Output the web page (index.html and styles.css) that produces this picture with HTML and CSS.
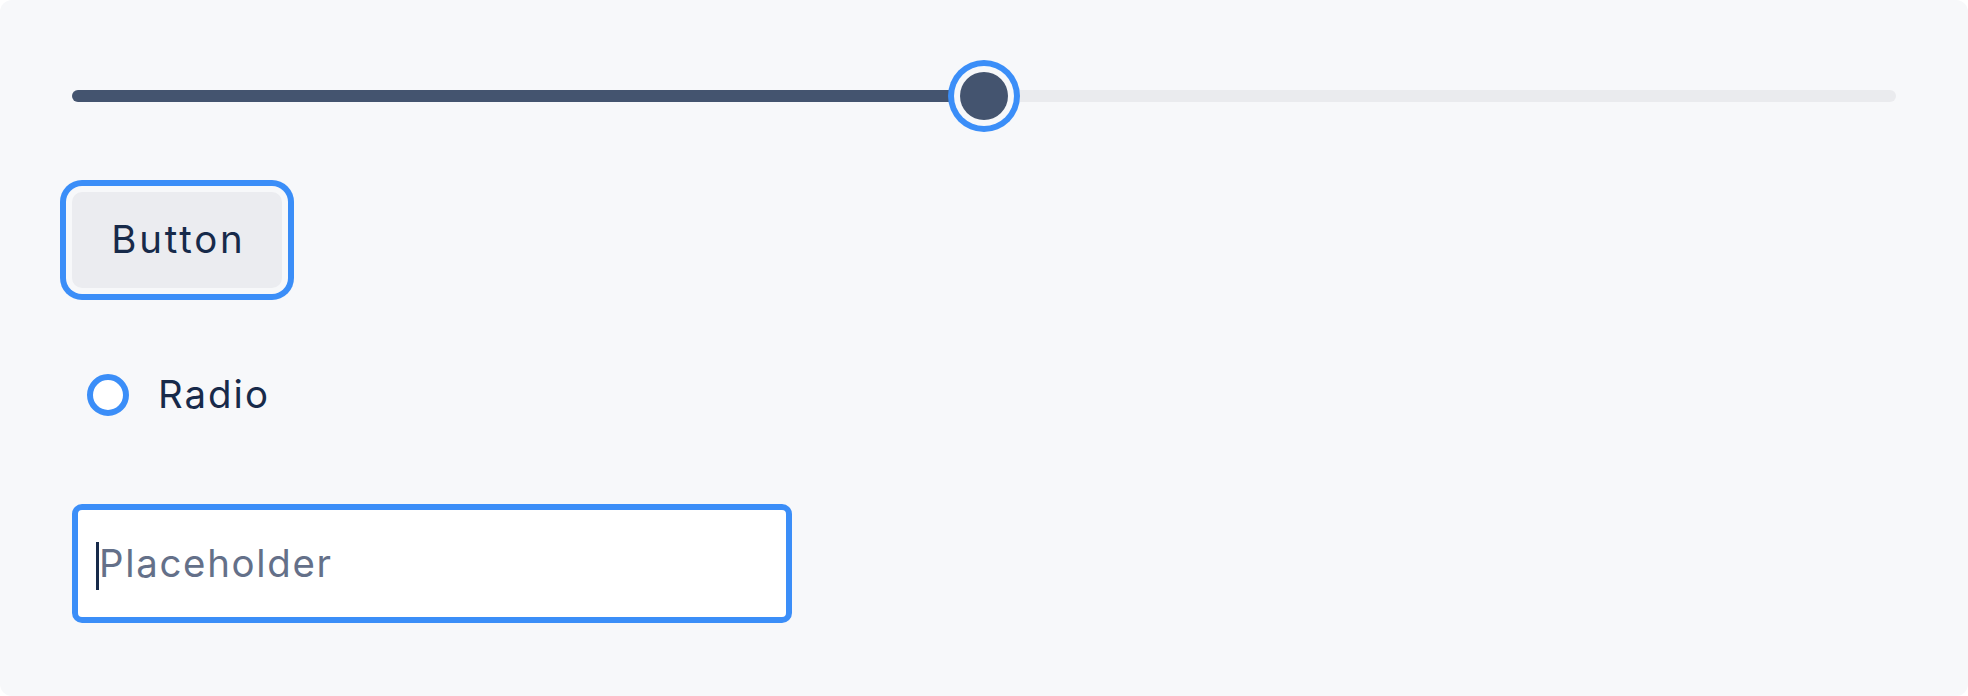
FILE: index.html
```html
<!DOCTYPE html>
<html lang="en">
<head>
<meta charset="utf-8">
<title>Controls</title>
<link rel="stylesheet" href="styles.css">
</head>
<body>
<div class="panel">
  <div class="slider">
    <div class="track">
      <div class="fill" style="width: 50%"></div>
      <div class="thumb" style="left: 50%"></div>
    </div>
  </div>
  <div class="button-row">
    <button class="btn" type="button">Button</button>
  </div>
  <label class="radio-row">
    <span class="radio"></span>
    <span class="radio-label">Radio</span>
  </label>
  <div class="field">
    <span class="caret"></span>
    <span class="placeholder">Placeholder</span>
  </div>
</div>
</body>
</html>
```

FILE: styles.css
```css
html, body {
  margin: 0;
  padding: 0;
  background: #ffffff;
}

body {
  font-family: Inter, "Noto Sans", "DejaVu Sans", sans-serif;
  color: #172a4a;
}

.panel {
  box-sizing: border-box;
  width: 1968px;
  height: 696px;
  background: #f7f8fa;
  border-radius: 12px;
  padding: 72px 72px 0 72px;
  display: flex;
  flex-direction: column;
  align-items: flex-start;
}

.slider {
  align-self: stretch;
  height: 48px;
  display: flex;
  align-items: center;
}

.track {
  position: relative;
  flex: 1;
  height: 12px;
  border-radius: 6px;
  background: #eaebee;
}

.fill {
  height: 100%;
  border-radius: 6px 0 0 6px;
  background: #44546f;
}

.thumb {
  position: absolute;
  top: 50%;
  width: 48px;
  height: 48px;
  margin: -24px 0 0 -24px;
  border-radius: 50%;
  background: #44546f;
  box-shadow: 0 0 0 6px #f7f8fa, 0 0 0 12px #3b8ef8;
}

.button-row {
  margin-top: 72px;
}

.btn {
  width: 210px;
  height: 96px;
  border: none;
  border-radius: 10px;
  background: #ebecf0;
  color: #172a4a;
  font-family: Inter, "Noto Sans", sans-serif;
  font-size: 38.4px;
  line-height: 57.6px;
  letter-spacing: 2.8px;
  padding: 0 0 0 2.8px;
  box-shadow: 0 0 0 6px #f7f8fa, 0 0 0 12px #3b8ef8;
}

.radio-row {
  margin-top: 78px;
  margin-left: 15px;
  height: 58px;
  display: flex;
  align-items: center;
  gap: 29px;
}

.radio {
  box-sizing: border-box;
  width: 42px;
  height: 42px;
  border-radius: 50%;
  border: 6px solid #3b8ef8;
  background: #ffffff;
}

.radio-label {
  font-size: 38.4px;
  line-height: 57.6px;
  letter-spacing: 2px;
  color: #172a4a;
}

.field {
  box-sizing: border-box;
  margin-top: 80px;
  width: 720px;
  height: 119px;
  border: 6px solid #3b8ef8;
  border-radius: 10px;
  background: #ffffff;
  padding-left: 18px;
  display: flex;
  align-items: center;
}

.caret {
  width: 3px;
  height: 48px;
  background: #172a4a;
  margin-top: 4px;
}

.placeholder {
  font-size: 38.4px;
  line-height: 57.6px;
  letter-spacing: 1.7px;
  color: #647089;
}
```
